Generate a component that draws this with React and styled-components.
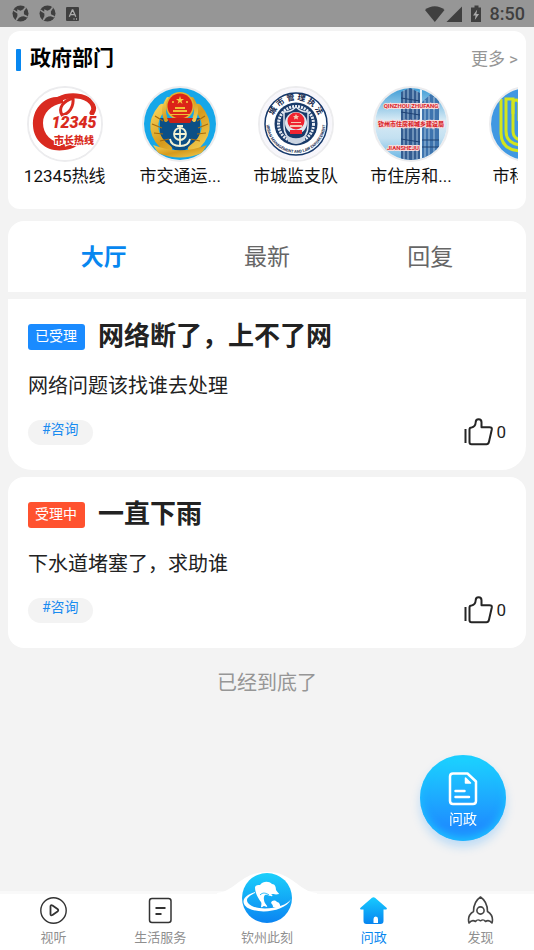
import React from 'react';
import styled, { createGlobalStyle } from 'styled-components';

const colors = {
  page: '#f3f3f3',
  blue: '#0787f0',
  text: '#222',
  muted: '#969696',
  status: '#3f3f3f',
};

const GlobalStyle = createGlobalStyle`
  * {
    box-sizing: border-box;
  }

  body {
    margin: 0;
    background: ${colors.page};
    color: #111;
    font-family: Roboto, "Noto Sans CJK SC", sans-serif;
  }

  button {
    margin: 0;
    padding: 0;
    border: 0;
    background: none;
    color: inherit;
    font: inherit;
    cursor: pointer;
  }

  a {
    color: inherit;
    text-decoration: none;
  }

  svg {
    display: block;
    flex: none;
  }
`;

const Page = styled.div`
  display: flex;
  flex-direction: column;
  min-height: 100vh;
`;

const StatusBar = styled.header`
  display: flex;
  align-items: center;
  justify-content: space-between;
  height: 27px;
  padding: 0 9px 0 12px;
  background: #969696;
  color: ${colors.status};
  font-size: 18px;
  font-weight: 500;
`;

const StatusGroup = styled.div`
  display: flex;
  align-items: center;
  gap: ${({ $gap }) => $gap}px;
`;

const Content = styled.main`
  display: flex;
  flex-direction: column;
  padding: 4px 8px 24px;
`;

const Departments = styled.section`
  height: 178px;
  padding: 12px 8px;
  border-radius: 12px;
  background: #fff;
`;

const SectionHead = styled.div`
  display: flex;
  align-items: center;
  justify-content: space-between;
  height: 30px;
`;

const SectionTitle = styled.h2`
  display: flex;
  align-items: center;
  gap: 9px;
  margin: 0;
  color: #000;
  font-size: 21px;
  font-weight: 700;
  line-height: 30px;

  &::before {
    content: '';
    width: 5px;
    height: 22px;
    margin-top: 3px;
    border-radius: 1px;
    background: ${colors.blue};
  }
`;

const More = styled.a`
  padding-bottom: 2px;
  color: ${colors.muted};
  font-size: 17px;
`;

const DepartmentList = styled.div`
  display: flex;
  margin-top: 13px;
  overflow: hidden;
`;

const Department = styled.a`
  display: flex;
  flex: 0 0 23%;
  flex-direction: column;
  align-items: center;
  padding-right: 18px;
  font-size: 17px;
  line-height: 28px;
  white-space: nowrap;
`;

const Emblem = styled.svg`
  width: 76px;
  height: 76px;
  border: 2px solid #ececee;
  border-radius: 50%;
`;

const Tabs = styled.nav`
  display: grid;
  grid-template-columns: repeat(3, 1fr);
  height: 71px;
  margin-top: 12px;
  padding: 0 14px;
  border-radius: 16px 16px 0 0;
  background: #fff;
`;

const Tab = styled.button`
  padding-bottom: 4px;
  color: ${({ $active }) => ($active ? colors.blue : '#666')};
  font-size: 23px;
  font-weight: ${({ $active }) => ($active ? 700 : 400)};
`;

const Card = styled.article`
  margin-top: 7px;
  padding: 18px 20px 25px;
  border-radius: ${({ $first }) => ($first ? '0 0 24px 24px' : '16px')};
  background: #fff;
  color: ${colors.text};
`;

const CardHead = styled.div`
  display: flex;
  align-items: center;
  gap: 13px;
`;

const Status = styled.span`
  height: 26px;
  margin-top: 2px;
  padding: 0 8px 0 7px;
  border-radius: 3px;
  background: ${({ $done }) => ($done ? '#1a8bff' : '#ff522f')};
  color: #fff;
  font-size: 14px;
  line-height: 24px;
`;

const CardTitle = styled.h3`
  margin: 0;
  font-size: 26px;
  font-weight: 700;
  line-height: 38px;
`;

const CardText = styled.p`
  margin: 17px 0 0;
  font-size: 20px;
  line-height: 28px;
`;

const CardFoot = styled.div`
  display: flex;
  align-items: center;
  justify-content: space-between;
  height: 26px;
  margin-top: 19px;
`;

const Topic = styled.a`
  height: 25px;
  padding: 0 14px;
  border-radius: 13px;
  background: ${colors.page};
  color: #1a8bf0;
  font-size: 14px;
  line-height: 18px;
`;

const Like = styled.button`
  display: flex;
  align-items: center;
  gap: 2px;
  font-size: 17px;
`;

const EndNote = styled.p`
  margin: 21px 0 0;
  color: ${colors.muted};
  font-size: 20px;
  line-height: 28px;
  text-align: center;
`;

const AskButton = styled.button`
  position: fixed;
  right: 28px;
  bottom: 109px;
  display: flex;
  flex-direction: column;
  align-items: center;
  gap: 3px;
  width: 86px;
  height: 86px;
  padding-top: 17px;
  border-radius: 50%;
  background: linear-gradient(#1cd0ff 5%, #1e8fff 82%);
  box-shadow: inset 0 -3px 9px #1cc4ff, 0 6px 10px rgba(30, 150, 255, 0.25);
  color: #fff;
  font-size: 14px;
  line-height: 20px;
`;

const BottomNav = styled.nav`
  position: sticky;
  bottom: 0;
  display: grid;
  grid-template-columns: repeat(5, 1fr);
  grid-auto-rows: 56px;
  height: 59px;
  margin-top: auto;
  border-top: 3px solid #f9f9f9;
  background: #fff;
`;

const NavItem = styled.a`
  display: flex;
  flex-direction: column;
  align-items: center;
  justify-content: flex-end;
  gap: 4px;
  padding-bottom: 2px;
  color: ${({ $active }) => ($active ? colors.blue : '#8f8f8f')};
  font-size: 13px;
  line-height: 20px;
`;

const Hump = styled.svg`
  position: absolute;
  top: -25px;
  left: 50%;
  width: 100px;
  height: 26px;
  margin-left: -50px;
`;

const Logo = styled.svg`
  position: relative;
  width: 50px;
  height: 50px;
  margin-bottom: 1px;
`;

const SwirlIcon = () => (
  <svg width="17" height="17" viewBox="0 0 17 17">
    <circle cx="8.5" cy="8.5" r="8" fill={colors.status} />
    <path
      d="M4 5.500 7.500 6 9.500 4 10.500 0.500 12 1 11 5.500 12 8 16.500 8.500 16 10 12.500 10 10.500 11 8.500 13 7.500 16.500 6 16 6.500 12 5.500 9.500 0.500 8.500 0.800 7 4.800 8z"
      fill="#969696"
      transform="rotate(20 8.500 8.500)"
    />
  </svg>
);

const InputIcon = () => (
  <svg width="13" height="14" viewBox="0 0 13 14">
    <rect width="13" height="14" rx="1" fill={colors.status} />
    <path d="M3.3 9.7 6.3 3h.5l3 6.7M4.5 7.6h4.2M7.5 12h1M10 12h1" fill="none" stroke="#aaa" strokeWidth="1.3" />
  </svg>
);

const SignalIcons = () => (
  <svg width="58" height="18" viewBox="0 0 58 18" fill={colors.status}>
    <path d="M0 5C5.5 0 14 0 19.500 5L9.800 17z" />
    <path d="M37 1.500V17H21.500z" />
    <path d="M49.500 0.500h4v2h2.500v14.500H46V2.500h3.500z" />
    <path d="M52.200 4.500 48 10.500h2.600l-.8 4.500 4.300-6h-2.700z" fill="#aaa" />
  </svg>
);

const HotlineEmblem = () => (
  <Emblem viewBox="0 0 72 72">
    <rect width="72" height="72" fill="#fff" />
    <path
      d="M34 9C15 7 3 21 4 38c1 16 15 27 32 24 8-1 15-5 19-10-7 3-13 4-19 4-14-1-22-10-22-21 0-10 8-18 20-20z"
      fill="#d92a20"
    />
    <g fill="none" stroke="#d92a20" strokeLinecap="round">
      <path d="M30 11C40 6 56 7 62 14c4 5 3 8 1 11" strokeWidth="5" />
      <path d="M33 27c-4-7 1-14 11-17 1 9-4 16-11 17z" strokeWidth="3" />
    </g>
    <g fill="#d92a20" stroke="#fff" strokeWidth="2" paintOrder="stroke" textAnchor="middle">
      <text x="45" y="40" fontSize="16" fontWeight="900" fontStyle="italic">12345</text>
      <text x="45" y="56" fontSize="10" fontWeight="900">市长热线</text>
    </g>
  </Emblem>
);

const TransportEmblem = () => (
  <Emblem viewBox="0 0 72 72">
    <defs>
      <linearGradient id="gold" x2="1" y2="1">
        <stop offset="0" stopColor="#f5d257" />
        <stop offset="0.5" stopColor="#d69a1c" />
        <stop offset="1" stopColor="#f3cf54" />
      </linearGradient>
    </defs>
    <rect width="72" height="72" fill="#16a7e8" />
    <path d="M16 30h40v14c0 10-9 16-20 20-11-4-20-10-20-20z" fill="#0b4f86" />
    <g fill="none" stroke="url(#gold)" strokeLinecap="round">
      <path d="M18 20C6 34 8 49 24 61M54 20c12 14 10 29-6 41" strokeWidth="8" />
      <path d="M24 11c-5 8-5 13-2 21M48 11c5 8 5 13 2 21" strokeWidth="4" />
    </g>
    <path d="M11 28l8 5M8 36l10 4M10 45l9 1M16 53l9-2M61 28l-8 5M64 36l-10 4M62 45l-9 1M56 53l-9-2" stroke="#a96c0a" strokeWidth="1.200" />
    <path d="M9 57c18 7 36 7 54 0l-5 8c-15 6-29 6-44 0z" fill="url(#gold)" />
    <circle cx="36" cy="18" r="14" fill="#e4b22f" />
    <circle cx="36" cy="18" r="12.500" fill="#dc2318" />
    <path d="M29 22h14v2H29zM31 19h10v2H31zM26 26h20v1H26z" fill="#f0bd35" />
    <path d="M23 30h26l-3 5H26z" fill="#c92118" />
    <g fill="#f6ce43">
      <path d="M36 8l1 3h3l-2.500 2 1 3-2.500-2-2.500 2 1-3-2.500-2h3z" />
      <circle cx="29" cy="14" r="1" />
      <circle cx="43" cy="14" r="1" />
    </g>
    <g fill="none" stroke="#f3f2d3" strokeWidth="1.800">
      <circle cx="36" cy="46" r="6" />
      <path d="M36 37v21M31 46h10M26 51c1 6 5 7 10 7s9-1 10-7M33 38h6" />
    </g>
  </Emblem>
);

const UrbanEmblem = () => (
  <Emblem viewBox="0 0 72 72">
    <defs>
      <path id="ringTop" d="M12 36a24 24 0 0 1 48 0" />
      <path id="ringBottom" d="M7 30a29.500 29.500 0 1 0 58 0" />
    </defs>
    <rect width="72" height="72" fill="#f7f6fb" />
    <circle cx="36" cy="36" r="31" fill="#fff" stroke="#15386b" strokeWidth="1.500" />
    <text fontSize="8" fontWeight="700" fill="#15294e" textAnchor="middle">
      <textPath href="#ringTop" startOffset="50%">城 市 管 理 执 法</textPath>
    </text>
    <text fontSize="4" fontWeight="700" fill="#15294e" textAnchor="middle">
      <textPath href="#ringBottom" startOffset="50%">URBAN MANAGEMENT AND LAW ENFORCEMENT</textPath>
    </text>
    <circle cx="36" cy="36" r="21.500" fill="#183a69" />
    <circle cx="36" cy="36" r="17.500" fill="none" stroke="#e8ecf3" strokeWidth="3" strokeDasharray="2 1" />
    <path d="M24 24c5 0 9-2 12-5 3 3 7 5 12 5v14c0 9-5 14-12 17-7-3-12-8-12-17z" fill="#183a69" stroke="#dfe6ef" strokeWidth="1.500" />
    <path d="M25 45c5 7 17 7 22 0l-3 8c-5 4-11 4-16 0z" fill="#cbd5e2" />
    <circle cx="36" cy="35" r="11" fill="#dfe6ef" />
    <circle cx="36" cy="33" r="8.500" fill="#ef2430" />
    <path d="M30 37h12v2H30zM31 34h10v1H31zM36 26l1 2h2l-1.500 1.500.5 2-2-1-2 1 .5-2L33 28h2z" fill="#f6c7b0" />
    <path d="M30 42h12v4H30z" fill="#ef2430" />
  </Emblem>
);

const HousingEmblem = () => (
  <Emblem viewBox="0 0 72 72">
    <defs>
      <linearGradient id="sky" x2="0" y2="1">
        <stop offset="0" stopColor="#3f9dd6" />
        <stop offset="0.45" stopColor="#d8ebf5" />
        <stop offset="0.7" stopColor="#c3e0f1" />
        <stop offset="1" stopColor="#6bb6e4" />
      </linearGradient>
    </defs>
    <rect width="72" height="72" fill="url(#sky)" />
    <path d="M26 72V4l9-4 10 5v67z" fill="#345d91" />
    <path d="M47 72V14l9-8 8 6v60z" fill="#3e74ae" />
    <path d="M29 2v70M33 0v72M38 0v72M42 3v69M50 12v60M54 8v64M59 9v63" stroke="#a7c6df" />
    <path d="M26 10l19 3M26 17l19 3M26 24l19 3M26 51l19 3M26 58l19 3M47 20h17M47 52h17M47 59h17" stroke="#1f4273" />
    <path d="M46 0v72" stroke="#e8f4fb" strokeWidth="2" />
    <g fill="#d9262c" stroke="#f6dcdc" strokeWidth="2" paintOrder="stroke" textAnchor="middle">
      <text x="36" y="20" fontSize="6" fontWeight="700">QINZHOU ZHUFANG</text>
      <text x="36" y="38" fontSize="6" fontWeight="900">钦州市住房和城乡建设局</text>
      <text x="28" y="62" fontSize="6" fontWeight="700">JIANSHEJU</text>
    </g>
  </Emblem>
);

const ScienceEmblem = () => (
  <Emblem viewBox="0 0 72 72">
    <rect width="72" height="72" fill="#4098e2" />
    <g fill="none" stroke="#d3e51c" strokeWidth="3">
      <path d="M10 11v34c0 12 8 18 22 18" />
      <path d="M15 43V11h7v32c0 6 4 9 10 9" />
      <path d="M15 43c0 9 6 14 17 14M22 26V15c0-4 6-4 6 0v18M29 31h5M29 31v13h5" />
    </g>
  </Emblem>
);

const ThumbIcon = () => (
  <svg width="30" height="28" viewBox="0 0 30 28" fill="none" stroke="#252525" strokeWidth="2" strokeLinejoin="round">
    <path d="M1.500 11v14" />
    <path d="M5.500 11.500q0-2 2-2c2.700-.4 4-2.300 4.200-5.200 0-4 5.800-4 5.800 0v4.900h8q2.700 0 2.300 2.300l-2.800 12.300q-.6 2.400-2.500 2.400h-15q-2 0-2-2z" />
  </svg>
);

const DocumentIcon = () => (
  <svg width="30" height="34" viewBox="0 0 30 34" fill="none" stroke="#fff" strokeWidth="2.500" strokeLinecap="round" strokeLinejoin="round">
    <path d="M5 1.500h14.500L28 9.500V29q0 3-3 3H5q-3 0-3-3V4.500q0-3 3-3z" />
    <path d="M17.500 6v5h5z" fill="#fff" strokeWidth="1.500" />
    <path d="M7.500 19h9M7.500 25H21" />
  </svg>
);

const PlayIcon = () => (
  <svg width="27" height="27" viewBox="0 0 27 27" fill="none" stroke="#333" strokeLinejoin="round">
    <circle cx="13.500" cy="13.500" r="12.700" strokeWidth="1.400" />
    <path d="M10.500 9.500q0-2 2-1l5 3.500q1.500 1.300 0 2.500l-5 3.500q-2 1-2-1z" strokeWidth="1.800" />
  </svg>
);

const ServiceIcon = () => (
  <svg width="27" height="27" viewBox="0 0 27 27" fill="none" stroke="#333" strokeWidth="1.500">
    <rect x="2.500" y="1.500" width="21.500" height="24" rx="2.500" />
    <path d="M8.500 11h10M8.500 17h6" strokeWidth="2" />
  </svg>
);

const HomeIcon = () => (
  <svg width="27" height="27" viewBox="0 0 27 27">
    <defs>
      <linearGradient id="home" x2="0" y2="1">
        <stop offset="0" stopColor="#17cbff" />
        <stop offset="1" stopColor="#0785f0" />
      </linearGradient>
    </defs>
    <path d="M12 .8q1.500-1.200 3 0l11.500 10q1 1.300-.5 1.700h-2.500V24q0 3-3 3h-14q-3 0-3-3V12.500H1q-1.500-.4-.5-1.700z" fill="url(#home)" />
    <path d="M13.500 26v-4q0-2.500 2.300-2.500T18 22v4z" fill="#fff" />
  </svg>
);

const RocketIcon = () => (
  <svg width="27" height="28" viewBox="0 0 27 28" fill="none" stroke="#444" strokeWidth="1.600" strokeLinejoin="round">
    <path d="M13.500 1C9 4 6.500 9 6.500 15.500c-4 2.500-6 6-4.500 11.500 2-2.500 4-3.300 6.500-1.500 1.500-2 2.500-2.300 5-.7 2.500-1.600 3.500-1.300 5 .7 2.500-1.800 4.500-1 6.500 1.500 1.500-5.500-.5-9-4.500-11.500C20.500 9 18 4 13.500 1z" />
    <circle cx="13.500" cy="14.500" r="3.600" />
  </svg>
);

const DolphinLogo = () => (
  <Logo viewBox="0 0 50 50">
    <defs>
      <linearGradient id="sea" x2="0" y2="1">
        <stop offset="0" stopColor="#1bd0fb" />
        <stop offset="1" stopColor="#0b84f2" />
      </linearGradient>
    </defs>
    <circle cx="25" cy="25" r="25" fill="url(#sea)" />
    <path d="M13 19C4 22 0 26 2 31c5 11 41 10 47-5-5 9-34 14-43 4-3-4 1-7 7-10z" fill="#fff" />
    <path d="M12 14c1-2 3-2 5-2 3-4 9-4 12-1 3 0 4 3 4 6 1 2 3 3 3 4-3 1-6 0-8 0 2 1 2 3 0 2-2 0-4-2-6-1-2 2-1 6 0 8 1 2 3 3 2 4-1 0-2-1-3-1-1 0-2 2-3 1 0-2 1-3 0-5-3-4-6-9-6-15z" fill="#fff" transform="translate(1)" />
    <path d="M18 22c3-3 6-2 9 0" fill="none" stroke="#20b7f8" />
    <path d="M29 30c1-3 4-3 6-1 2 0 4 3 3 6-3 0-5 0-7-1 0-2-1-3-2-4z" fill="#fff" />
  </Logo>
);

const departments = [
  { name: '12345热线', Picture: HotlineEmblem },
  { name: '市交通运...', Picture: TransportEmblem },
  { name: '市城监支队', Picture: UrbanEmblem },
  { name: '市住房和...', Picture: HousingEmblem },
  { name: '市科技局', Picture: ScienceEmblem },
];

const tabs = ['大厅', '最新', '回复'];

const questions = [
  { title: '网络断了，上不了网', text: '网络问题该找谁去处理', status: '已受理', done: true },
  { title: '一直下雨', text: '下水道堵塞了，求助谁', status: '受理中', done: false },
];

export default function App() {
  const [activeTab, setActiveTab] = React.useState(tabs[0]);

  return (
    <Page>
      <GlobalStyle />
      <StatusBar>
        <StatusGroup $gap={10}>
          <SwirlIcon />
          <SwirlIcon />
          <InputIcon />
        </StatusGroup>
        <StatusGroup $gap={7}>
          <SignalIcons />
          <span>8:50</span>
        </StatusGroup>
      </StatusBar>

      <Content>
        <Departments>
          <SectionHead>
            <SectionTitle>政府部门</SectionTitle>
            <More href="#departments">更多 &gt;</More>
          </SectionHead>
          <DepartmentList>
            {departments.map(({ name, Picture }) => (
              <Department href="#department" key={name}>
                <Picture />
                {name}
              </Department>
            ))}
          </DepartmentList>
        </Departments>

        <Tabs>
          {tabs.map((tab) => (
            <Tab
              type="button"
              key={tab}
              $active={tab === activeTab}
              onClick={() => setActiveTab(tab)}
            >
              {tab}
            </Tab>
          ))}
        </Tabs>

        {questions.map((question, index) => (
          <Card key={question.title} $first={index === 0}>
            <CardHead>
              <Status $done={question.done}>{question.status}</Status>
              <CardTitle>{question.title}</CardTitle>
            </CardHead>
            <CardText>{question.text}</CardText>
            <CardFoot>
              <Topic href="#topic">#咨询</Topic>
              <Like type="button" aria-label="点赞">
                <ThumbIcon />
                0
              </Like>
            </CardFoot>
          </Card>
        ))}
        <EndNote>已经到底了</EndNote>
      </Content>

      <AskButton type="button">
        <DocumentIcon />
        问政
      </AskButton>

      <BottomNav>
        <Hump viewBox="0 0 100 26">
          <path d="M0 26V24C18 23 24 3 50 3s32 20 50 21v2z" fill="#fff" />
        </Hump>
        <NavItem href="#media">
          <PlayIcon />
          视听
        </NavItem>
        <NavItem href="#services">
          <ServiceIcon />
          生活服务
        </NavItem>
        <NavItem href="#home">
          <DolphinLogo />
          钦州此刻
        </NavItem>
        <NavItem href="#ask" $active>
          <HomeIcon />
          问政
        </NavItem>
        <NavItem href="#discover">
          <RocketIcon />
          发现
        </NavItem>
      </BottomNav>
    </Page>
  );
}
